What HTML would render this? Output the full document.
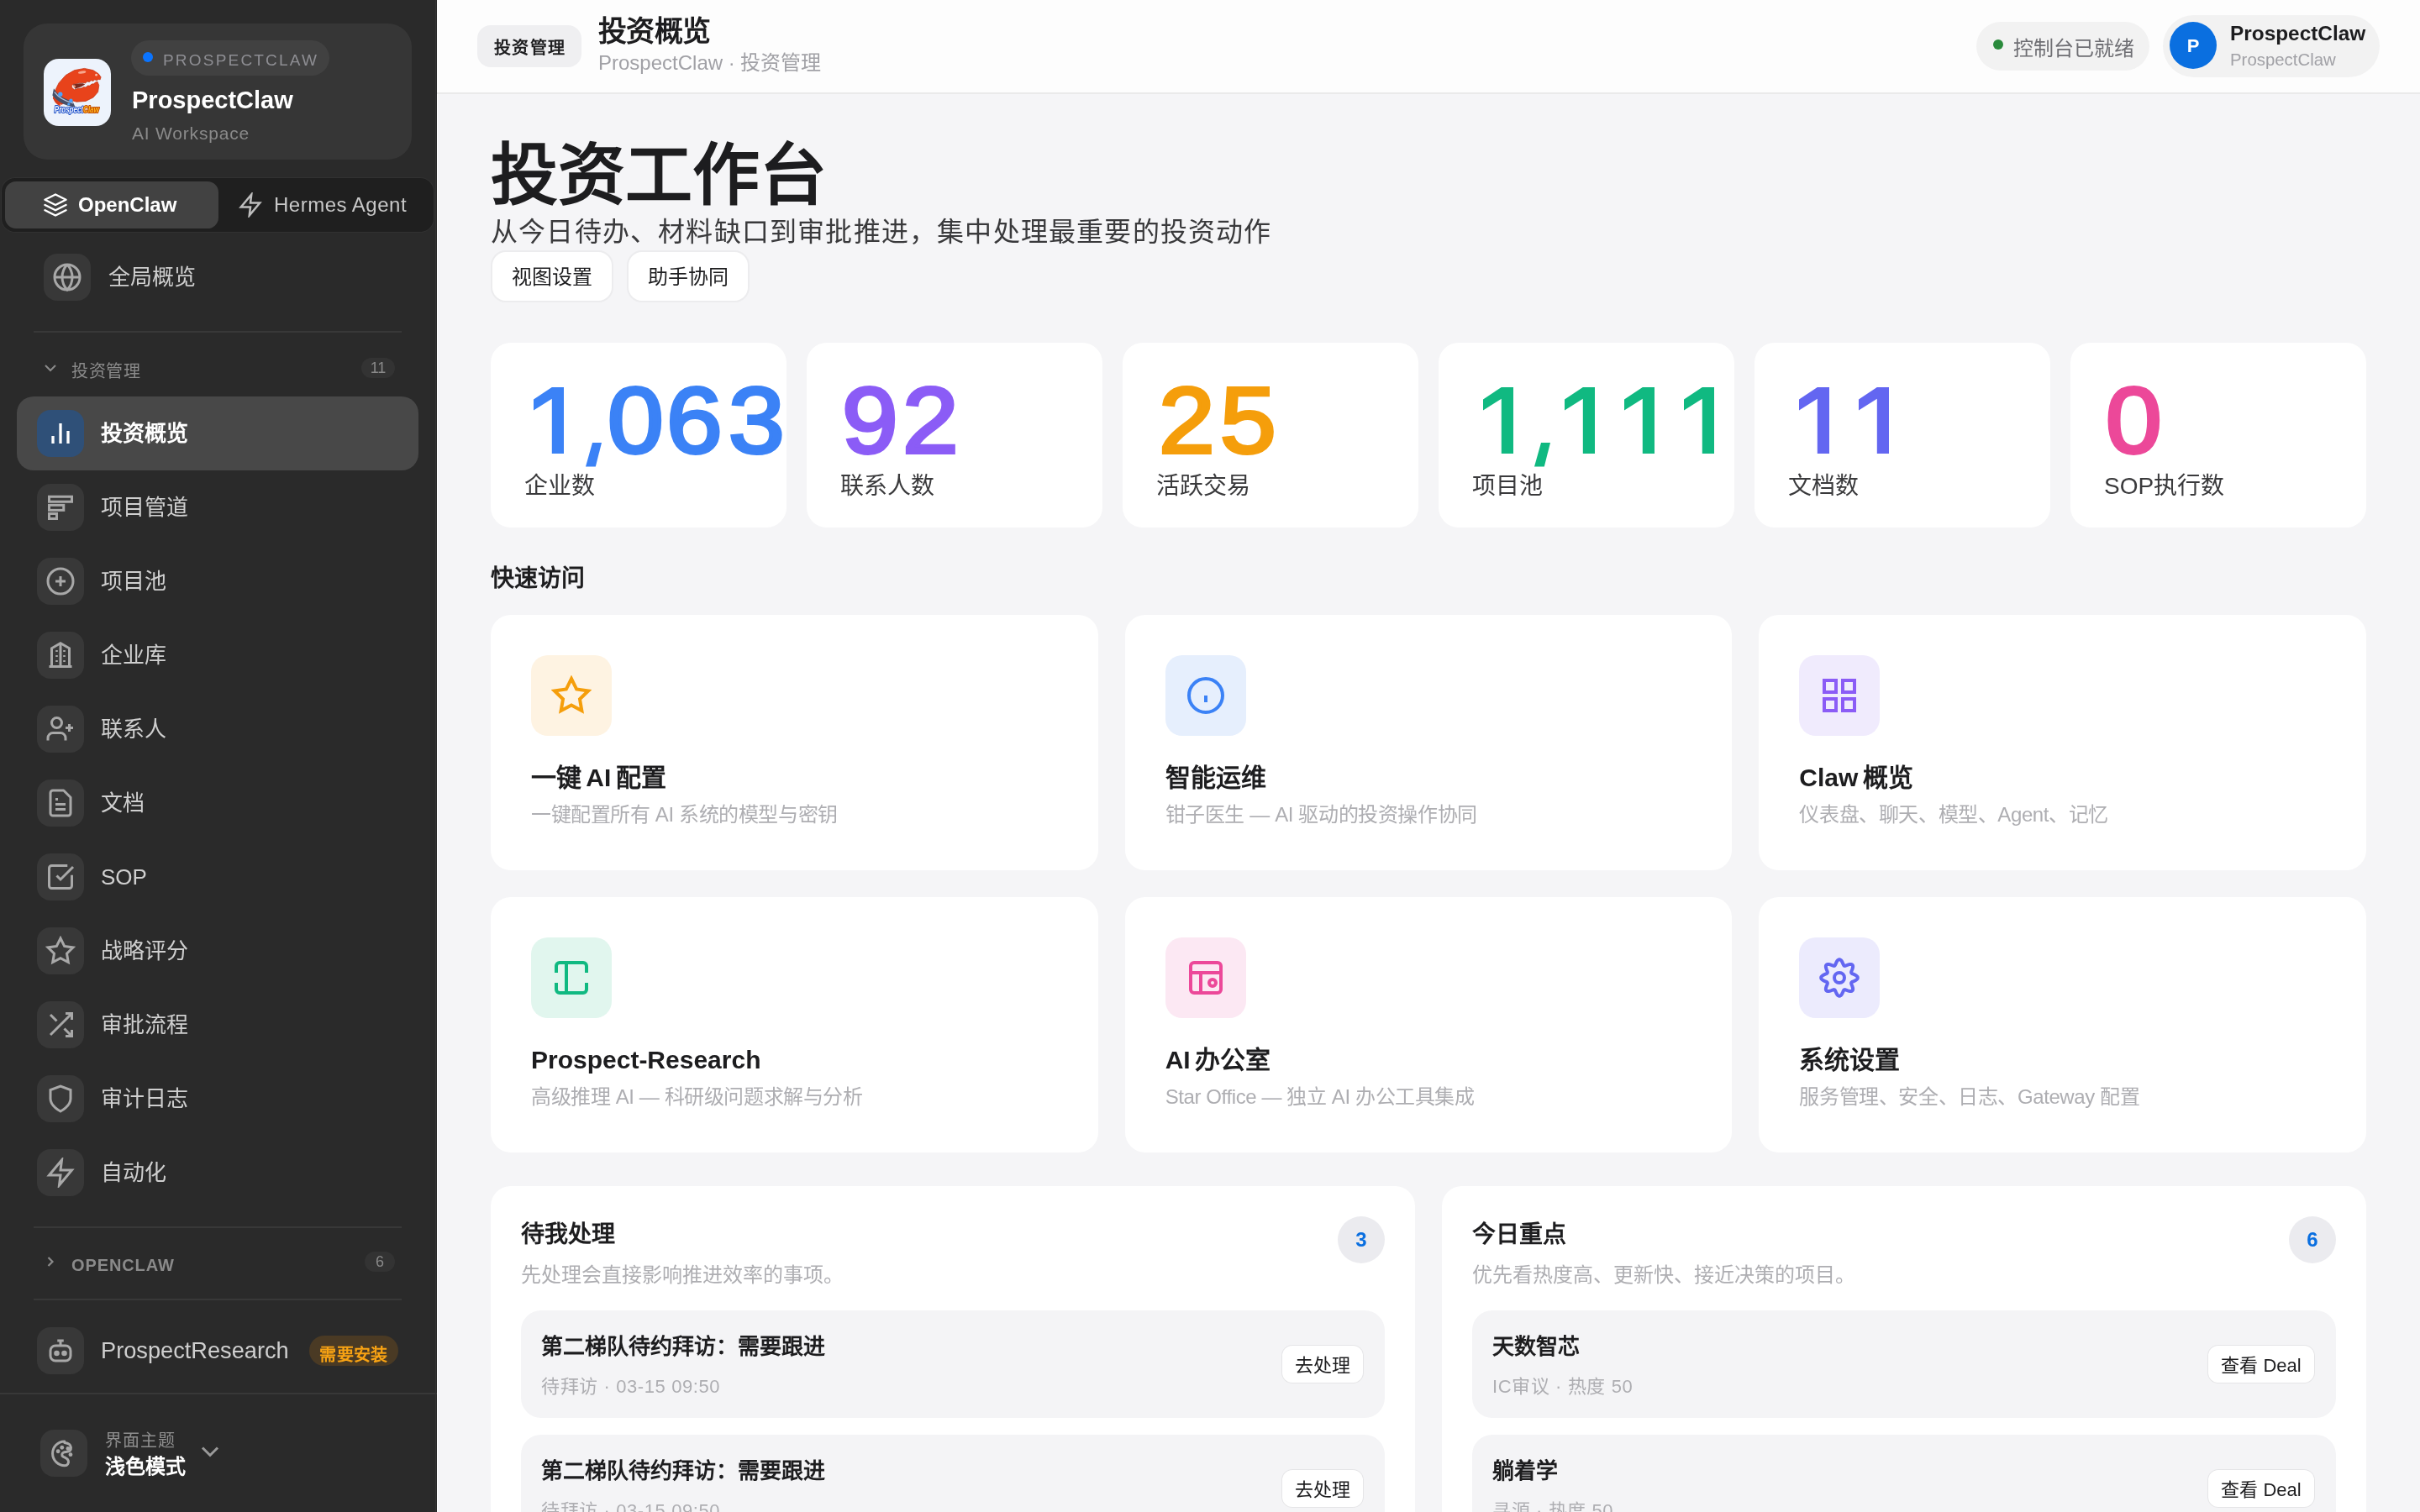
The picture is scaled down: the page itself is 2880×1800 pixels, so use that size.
<!DOCTYPE html>
<html lang="zh-CN">
<head>
<meta charset="utf-8">
<title>ProspectClaw</title>
<style>
*{box-sizing:border-box;margin:0;padding:0}
html,body{width:1440px;height:900px;overflow:hidden;background:#f5f5f7}
@media (min-width:2000px){html{zoom:2}}
body{font-family:"Liberation Sans",sans-serif;position:relative;-webkit-font-smoothing:antialiased;will-change:transform}
.a{position:absolute}
.t{position:absolute;white-space:nowrap;line-height:1}
svg{display:block}
/* sidebar */
#sb{position:absolute;left:0;top:0;width:260px;height:900px;background:#2a2a2a;overflow:hidden}
.ib{position:absolute;width:28px;height:28px;border-radius:8px;background:#383838}
.ib svg{position:absolute;left:5px;top:5px;width:18px;height:18px}
.si{position:absolute;left:60px;font-size:13px;color:#cfcfcf;line-height:16px}
.div{position:absolute;left:20px;width:219px;height:1px;background:#383838}
/* main */
#hd{position:absolute;left:260px;top:0;width:1180px;height:56px;background:#fdfdfd;border-bottom:1px solid #eaeaea}
.card{position:absolute;background:#fff;border-radius:12px}
.dg{position:absolute;font-weight:400;font-size:55.5px;line-height:1;-webkit-text-stroke:2px currentColor;transform:scaleX(1.08);transform-origin:0 0;white-space:nowrap}
.lbl{position:absolute;left:20px;font-size:14px;color:#3a3a3c;line-height:16px}
.qc{position:absolute;background:#fff;border-radius:12px;width:361.33px;height:152px}
.qi{position:absolute;left:24px;top:24px;width:48px;height:48px;border-radius:10px}
.qi svg{position:absolute;left:12px;top:12px;width:24px;height:24px}
.qt{position:absolute;left:24px;font-size:15px;word-spacing:-1.5px;font-weight:700;color:#1d1d1f;line-height:18px;white-space:nowrap}
.qs{position:absolute;left:24px;font-size:12px;letter-spacing:-0.2px;color:#aeaeb2;line-height:14px;white-space:nowrap}
.pn{position:absolute;background:#fff;border-radius:12px;width:550px;height:260px}
.pt{position:absolute;left:18px;font-size:14px;font-weight:700;color:#1d1d1f;line-height:16px}
.ps{position:absolute;left:18px;font-size:12px;color:#aeaeb2;line-height:14px;white-space:nowrap}
.pb{position:absolute;right:18px;width:28px;height:28px;border-radius:14px;background:#ebebef;color:#0a6fe0;font-size:12px;font-weight:700;text-align:center;line-height:28px}
.it{position:absolute;left:18px;width:514px;height:64px;border-radius:12px;background:#f4f4f6}
.itt{position:absolute;left:12px;font-size:13px;font-weight:700;color:#1d1d1f;line-height:15px;white-space:nowrap}
.its{position:absolute;left:12px;font-size:11px;letter-spacing:0.3px;margin-top:1px;color:#aeaeb2;line-height:13px;white-space:nowrap}
.ibtn{position:absolute;right:13px;top:21px;height:22px;border-radius:6px;background:#fff;font-size:11px;color:#1d1d1f;line-height:24px;text-align:center;box-shadow:0 0 0 0.5px rgba(0,0,0,0.06)}
</style>
</head>
<body>
<div id="sb">
  <!-- brand card -->
  <div class="a" style="left:14px;top:14px;width:231px;height:81px;border-radius:14px;background:#363636"></div>
  <div class="a" style="left:26px;top:35px;width:40px;height:40px">
    <svg width="40" height="40" viewBox="0 0 40 40">
      <rect x="0" y="0" width="40" height="40" rx="9" fill="#edf3fc"/>
      <path d="M5.70 23.70 L6.70 19.10 L9.00 14.40 L13.10 9.75 L18.30 6.80 L24.20 5.70 L29.40 6.80 L32.60 8.90 L34.05 10.90 L33.60 12.40 L32.60 12.20 L31.60 12.90 L30.40 12.40 L29.40 13.20 L28.20 12.90 L27.20 13.80 L25.90 13.50 L24.80 14.50 L23.40 14.20 L21.50 14.30 L19.60 14.70 L17.70 15.10 L16.60 16.00 L16.90 17.30 L18.30 18.40 L20.50 17.60 L22.50 17.50 L23.80 16.80 L25.00 17.00 L26.20 16.00 L27.40 16.00 L28.60 15.00 L29.80 14.90 L30.80 14.00 L32.00 13.60 L32.90 15.80 L32.30 19.80 L29.50 23.00 L25.00 25.20 L19.50 25.60 L16.00 24.60 L10.50 27.20 Z" fill="#e8431b" stroke="#c3300e" stroke-width="0.35" stroke-linejoin="round"/>
      <path d="M17.4 15.3 L19.6 14.9 L21.5 14.6 L23.4 14.6 L24.6 15.2 L22.4 16.6 L20.4 17.2 L18.6 17.9 Z" fill="#6d1406" opacity="0.9"/>
      <ellipse cx="22.8" cy="8.0" rx="2.4" ry="0.8" fill="#ffd2bd" opacity="0.7" transform="rotate(-10 22.8 8.0)"/>
      <circle cx="31.3" cy="9.6" r="0.7" fill="#ffe2d4" opacity="0.8"/>
      <circle cx="18.2" cy="16.4" r="0.8" fill="#ffb08f" opacity="0.8"/>
      <path d="M6.0 17.6 C8 21 12 24 17.2 25.2 L18.8 28.8 C12.5 28.2 7.5 25.2 5.2 21.8 Z" fill="#46506a"/>
      <path d="M6.4 19.8 C8.6 22.6 12.4 25.2 17.6 26.4" stroke="#b8c2d6" stroke-width="0.7" fill="none"/>
      <circle cx="9.9" cy="21.1" r="1.3" fill="#4aa3ff"/>
      <circle cx="16.2" cy="24.9" r="1.1" fill="#4aa3ff"/>
      <circle cx="14.9" cy="27.0" r="0.8" fill="#4aa3ff"/>
      <path d="M5.4 22.4 C5.8 25.2 7.4 27.2 10 28.2 L9.6 26 Z" fill="#d83b17"/>
      <text x="6.4" y="32.2" textLength="26.5" lengthAdjust="spacingAndGlyphs" font-family="Liberation Sans" font-weight="700" font-style="italic" font-size="5" fill="#f2f6ff" stroke="#1d50c8" stroke-width="1.1" stroke-linejoin="round" paint-order="stroke">Prospect<tspan fill="#ffb21e" stroke="#c04a00">Claw</tspan></text>
    </svg>
  </div>
  <div class="a" style="left:78px;top:24px;width:118px;height:21px;border-radius:11px;background:#414141"></div>
  <div class="a" style="left:85px;top:31px;width:6px;height:6px;border-radius:3px;background:#0a74ff"></div>
  <div class="t" style="left:97px;top:31px;font-size:9.5px;letter-spacing:1.1px;color:#8e8e93">PROSPECTCLAW</div>
  <div class="t" style="left:78.5px;top:52.3px;font-size:14.5px;font-weight:700;color:#fff">ProspectClaw</div>
  <div class="t" style="left:78.5px;top:74px;font-size:10.5px;letter-spacing:0.4px;color:#8a8a8a">AI Workspace</div>

  <!-- segmented -->
  <div class="a" style="left:1px;top:106px;width:257px;height:32px;border-radius:8px;background:#1f1f1f;box-shadow:0 0 0 0.5px #313131"></div>
  <div class="a" style="left:3px;top:108px;width:127px;height:28px;border-radius:6.5px;background:#424242"></div>
  <svg class="a" style="left:25.5px;top:114.5px" width="15" height="15" viewBox="0 0 24 24" fill="none" stroke="#fff" stroke-width="2" stroke-linejoin="round" stroke-linecap="round"><path d="M12 2 2 7l10 5 10-5-10-5Z"/><path d="m2 17 10 5 10-5"/><path d="m2 12 10 5 10-5"/></svg>
  <div class="t" style="left:46.5px;top:116.2px;font-size:12px;font-weight:700;color:#fff">OpenClaw</div>
  <svg class="a" style="left:141.5px;top:114.5px" width="15" height="15" viewBox="0 0 24 24" fill="none" stroke="#bdbdbd" stroke-width="2" stroke-linejoin="miter"><polygon points="13 2 3 14 12 14 11 22 21 10 12 10 13 2"/></svg>
  <div class="t" style="left:163px;top:116.2px;font-size:12px;letter-spacing:0.25px;color:#c8c8c8">Hermes Agent</div>

  <!-- global overview -->
  <div class="ib" style="left:26px;top:151px"><svg viewBox="0 0 24 24" fill="none" stroke="#a8a8a8" stroke-width="2"><circle cx="12" cy="12" r="10"/><path d="M12 2a14.5 14.5 0 0 0 0 20 14.5 14.5 0 0 0 0-20"/><path d="M2 12h20"/></svg></div>
  <div class="si" style="left:64.5px;top:157px;font-size:13px">全局概览</div>
  <div class="div" style="top:197px"></div>

  <!-- section header -->
  <svg class="a" style="left:24px;top:213.2px" width="12" height="12" viewBox="0 0 24 24" fill="none" stroke="#8a8a8a" stroke-width="2"><path d="m6 9 6 6 6-6"/></svg>
  <div class="t" style="left:42.5px;top:216.2px;font-size:10px;letter-spacing:0.3px;font-weight:500;color:#8a8a8a">投资管理</div>
  <div class="a" style="left:215px;top:213px;width:20px;height:12px;border-radius:6px;background:#333;color:#8a8a8a;font-size:9px;line-height:12px;text-align:center">11</div>

  <!-- active item -->
  <div class="a" style="left:10px;top:236px;width:239px;height:44px;border-radius:10px;background:#484848"></div>
  <div class="ib" style="left:22px;top:244px;background:#2f5078"><svg viewBox="0 0 24 24" fill="none" stroke="#fff" stroke-width="2.2"><path d="M18 20V10"/><path d="M12 20V4"/><path d="M6 20v-6"/></svg></div>
  <div class="si" style="top:250px;color:#fff;font-weight:700">投资概览</div>

  <div class="ib" style="top:288px;left:22px"><svg viewBox="0 0 24 24" fill="none" stroke="#a8a8a8" stroke-width="2"><rect x="3" y="3.5" width="18" height="4"/><rect x="3" y="10.25" width="11.5" height="4"/><rect x="3" y="17" width="6" height="4"/></svg></div>
  <div class="si" style="top:294px">项目管道</div>

  <div class="ib" style="top:332px;left:22px"><svg viewBox="0 0 24 24" fill="none" stroke="#a8a8a8" stroke-width="2"><circle cx="12" cy="12" r="10"/><path d="M8 12h8"/><path d="M12 8v8"/></svg></div>
  <div class="si" style="top:338px">项目池</div>

  <div class="ib" style="top:376px;left:22px"><svg viewBox="0 0 24 24" fill="none" stroke="#a8a8a8" stroke-width="2"><path d="M5 21V6.5L12 2.5l7 4V21"/><path d="M12 2.5V21"/><path d="M3 21h18"/><path d="M9 8v1.4M9 12v1.4M9 16v1.4M15 8v1.4M15 12v1.4M15 16v1.4" stroke-width="1.7"/></svg></div>
  <div class="si" style="top:382px">企业库</div>

  <div class="ib" style="top:420px;left:22px"><svg viewBox="0 0 24 24" fill="none" stroke="#a8a8a8" stroke-width="2"><path d="M16 21v-2a4 4 0 0 0-4-4H6a4 4 0 0 0-4 4v2"/><circle cx="9" cy="7" r="4"/><path d="M19 8v6"/><path d="M22 11h-6"/></svg></div>
  <div class="si" style="top:426px">联系人</div>

  <div class="ib" style="top:464px;left:22px"><svg viewBox="0 0 24 24" fill="none" stroke="#a8a8a8" stroke-width="2" stroke-linejoin="round"><path d="M14.5 2H6a2 2 0 0 0-2 2v16a2 2 0 0 0 2 2h12a2 2 0 0 0 2-2V7.5L14.5 2z"/><path d="M10 9H8"/><path d="M16 13H8"/><path d="M16 17H8"/></svg></div>
  <div class="si" style="top:470px">文档</div>

  <div class="ib" style="top:508px;left:22px"><svg viewBox="0 0 24 24" fill="none" stroke="#a8a8a8" stroke-width="2"><path d="M21 10.5V19a2 2 0 0 1-2 2H5a2 2 0 0 1-2-2V5a2 2 0 0 1 2-2h12.5"/><path d="m9 11 3 3L22 4"/></svg></div>
  <div class="si" style="top:514px">SOP</div>

  <div class="ib" style="top:552px;left:22px"><svg viewBox="0 0 24 24" fill="none" stroke="#a8a8a8" stroke-width="2"><polygon points="12 2 15.09 8.26 22 9.27 17 14.14 18.18 21.02 12 17.77 5.82 21.02 7 14.14 2 9.27 8.91 8.26 12 2"/></svg></div>
  <div class="si" style="top:558px">战略评分</div>

  <div class="ib" style="top:596px;left:22px"><svg viewBox="0 0 24 24" fill="none" stroke="#a8a8a8" stroke-width="2"><polyline points="16 3 21 3 21 8"/><line x1="4" y1="20" x2="21" y2="3"/><polyline points="21 16 21 21 16 21"/><line x1="15" y1="15" x2="21" y2="21"/><line x1="4" y1="4" x2="9" y2="9"/></svg></div>
  <div class="si" style="top:602px">审批流程</div>

  <div class="ib" style="top:640px;left:22px"><svg viewBox="0 0 24 24" fill="none" stroke="#a8a8a8" stroke-width="2"><path d="M12 22s8-4 8-10V5l-8-3-8 3v7c0 6 8 10 8 10z"/></svg></div>
  <div class="si" style="top:646px">审计日志</div>

  <div class="ib" style="top:684px;left:22px"><svg viewBox="0 0 24 24" fill="none" stroke="#a8a8a8" stroke-width="2"><polygon points="13 2 3 14 12 14 11 22 21 10 12 10 13 2"/></svg></div>
  <div class="si" style="top:690px">自动化</div>

  <div class="div" style="top:730px"></div>
  <svg class="a" style="left:25px;top:746px" width="10" height="10" viewBox="0 0 24 24" fill="none" stroke="#8a8a8a" stroke-width="2.6"><path d="m9 18 6-6-6-6"/></svg>
  <div class="t" style="left:42.5px;top:748px;font-size:10px;font-weight:700;letter-spacing:0.45px;color:#8a8a8a">OPENCLAW</div>
  <div class="a" style="left:217px;top:745px;width:18px;height:12px;border-radius:6px;background:#333;color:#8a8a8a;font-size:9px;line-height:12px;text-align:center">6</div>
  <div class="div" style="top:773px"></div>

  <div class="ib" style="top:790px;left:22px"><svg viewBox="0 0 24 24" fill="none" stroke="#a8a8a8" stroke-width="2"><path d="M12 4v4"/><path d="M9.5 4h5"/><rect x="4" y="8" width="16" height="12" rx="4"/><circle cx="9" cy="14" r="1.2" fill="#a8a8a8"/><circle cx="15" cy="14" r="1.2" fill="#a8a8a8"/></svg></div>
  <div class="si" style="top:796px;font-size:13.6px">ProspectResearch</div>
  <div class="a" style="left:184px;top:795px;width:53px;height:18px;border-radius:9px;background:#4a3a24;color:#f9a313;font-size:10px;letter-spacing:0.2px;font-weight:700;line-height:23px;text-align:center">需要安装</div>

  <div class="a" style="left:0;top:829px;width:260px;height:1px;background:#383838"></div>
  <div class="ib" style="left:24px;top:851px"><svg viewBox="0 0 24 24" fill="none" stroke="#a8a8a8" stroke-width="2" stroke-linecap="round"><path d="M12.5 2.6 A9.6 9.6 0 0 0 12.8 21.8 C14.8 21.8 16.2 19.8 15.5 17.8 C14.9 16.1 12.7 15.5 11.3 14.6 C10.1 13.8 10.3 12 11.7 11.4 C13.1 10.9 15.6 11.1 16.8 10.1 C18.1 8.9 17.9 6.1 16.3 4.9 C15.1 4 13.9 3.8 12.6 3.6"/><circle cx="10.5" cy="7.5" r="1.6" fill="#a8a8a8" stroke="none"/><circle cx="7.4" cy="10.5" r="1.6" fill="#a8a8a8" stroke="none"/><circle cx="15.3" cy="8.3" r="1.6" fill="#a8a8a8" stroke="none"/><circle cx="17.3" cy="13.1" r="1.6" fill="#a8a8a8" stroke="none"/></svg></div>
  <div class="t" style="left:62.5px;top:852.5px;font-size:10px;letter-spacing:0.5px;color:#8e8e8e">界面主题</div>
  <div class="t" style="left:62.5px;top:867px;font-size:12px;font-weight:700;color:#fff">浅色模式</div>
  <svg class="a" style="left:116px;top:855px" width="18" height="18" viewBox="0 0 24 24" fill="none" stroke="#9a9a9a" stroke-width="2"><path d="m6 9 6 6 6-6"/></svg>
</div>

<div class="a" style="left:259px;top:0;width:0.5px;height:900px;background:#343434"></div>
<div class="a" style="left:260px;top:0;width:0.5px;height:900px;background:#ffffff"></div>
<!-- header -->
<div id="hd">
  <div class="a" style="left:24px;top:15px;width:62px;height:25px;border-radius:8px;background:#efeff1;font-size:10px;letter-spacing:0.6px;text-indent:0.6px;font-weight:700;color:#1d1d1f;text-align:center;line-height:27px">投资管理</div>
  <div class="t" style="left:96px;top:10px;font-size:17px;letter-spacing:-0.3px;font-weight:700;color:#1d1d1f">投资概览</div>
  <div class="t" style="left:96px;top:31.5px;font-size:12px;color:#a1a1a6">ProspectClaw · 投资管理</div>
  <div class="a" style="left:916px;top:13px;width:103px;height:29px;border-radius:15px;background:#f2f2f2"></div>
  <div class="a" style="left:926px;top:23.6px;width:6px;height:6px;border-radius:3px;background:#2a8a3c"></div>
  <div class="t" style="left:938px;top:23px;font-size:12px;color:#6e6e73">控制台已就绪</div>
  <div class="a" style="left:1027px;top:9px;width:129px;height:37px;border-radius:19px;background:#f2f2f2"></div>
  <div class="a" style="left:1031px;top:13px;width:28px;height:28px;border-radius:14px;background:#0a6fe0;color:#fff;font-weight:700;font-size:11px;text-align:center;line-height:29.4px">P</div>
  <div class="t" style="left:1067px;top:14px;font-size:12.2px;font-weight:700;color:#1d1d1f">ProspectClaw</div>
  <div class="t" style="left:1067px;top:30.5px;font-size:10.2px;color:#a1a1a6">ProspectClaw</div>
</div>

<!-- content -->
<div class="t" style="left:292px;top:84.5px;font-size:40px;font-weight:700;color:#1d1d1f">投资工作台</div>
<div class="t" style="left:292px;top:129.8px;font-size:16px;letter-spacing:0.6px;color:#3a3a3c">从今日待办、材料缺口到审批推进，集中处理最重要的投资动作</div>
<div class="a" style="left:293px;top:150px;width:71px;height:29px;border-radius:8px;background:#fff;box-shadow:0 0 0 1px #ececee;font-size:12px;color:#1d1d1f;text-align:center;line-height:30px">视图设置</div>
<div class="a" style="left:374px;top:150px;width:71px;height:29px;border-radius:8px;background:#fff;box-shadow:0 0 0 1px #ececee;font-size:12px;color:#1d1d1f;text-align:center;line-height:30px">助手协同</div>

<!-- stats -->
<div class="card" style="left:292px;top:204px;width:176px;height:110px"><div class="lbl" style="top:77.5px">企业数</div></div>
<div class="card" style="left:480px;top:204px;width:176px;height:110px"><div class="lbl" style="top:77.5px">联系人数</div></div>
<div class="card" style="left:668px;top:204px;width:176px;height:110px"><div class="lbl" style="top:77.5px">活跃交易</div></div>
<div class="card" style="left:856px;top:204px;width:176px;height:110px"><div class="lbl" style="top:77.5px">项目池</div></div>
<div class="card" style="left:1044px;top:204px;width:176px;height:110px"><div class="lbl" style="top:77.5px">文档数</div></div>
<div class="card" style="left:1232px;top:204px;width:176px;height:110px"><div class="lbl" style="top:77.5px">SOP执行数</div></div>


<!-- numbers -->
<svg class="a" style="left:317.45px;top:230.45px" width="18" height="39.5" viewBox="0 0 18 39.5"><polygon points="0,7.27 10.9,0 18,0 18,39.5 10.9,39.5 10.9,6.9 0,13.7" fill="#3b82f6"/></svg>
<svg class="a" style="left:348.30px;top:263.4px" width="10" height="15" viewBox="0 0 10 15"><polygon points="4.00,0.00 9.50,0.00 5.90,14.20 0.00,14.20" fill="#3b82f6"/></svg>
<div class="dg" style="left:361.50px;top:223.1px;color:#3b82f6">0</div>
<div class="dg" style="left:396.40px;top:223.1px;color:#3b82f6">6</div>
<div class="dg" style="left:433.50px;top:223.1px;color:#3b82f6">3</div>
<div class="dg" style="left:501.00px;top:223.1px;color:#8b5cf6">9</div>
<div class="dg" style="left:536.80px;top:223.1px;color:#8b5cf6">2</div>
<div class="dg" style="left:689.50px;top:223.1px;color:#f59e0b">2</div>
<div class="dg" style="left:726.20px;top:223.1px;color:#f59e0b">5</div>
<svg class="a" style="left:882.40px;top:230.45px" width="18" height="39.5" viewBox="0 0 18 39.5"><polygon points="0,7.27 10.9,0 18,0 18,39.5 10.9,39.5 10.9,6.9 0,13.7" fill="#10b981"/></svg>
<svg class="a" style="left:912.80px;top:263.4px" width="10" height="15" viewBox="0 0 10 15"><polygon points="4.00,0.00 9.50,0.00 5.90,14.20 0.00,14.20" fill="#10b981"/></svg>
<svg class="a" style="left:931.00px;top:230.45px" width="18" height="39.5" viewBox="0 0 18 39.5"><polygon points="0,7.27 10.9,0 18,0 18,39.5 10.9,39.5 10.9,6.9 0,13.7" fill="#10b981"/></svg>
<svg class="a" style="left:966.30px;top:230.45px" width="18" height="39.5" viewBox="0 0 18 39.5"><polygon points="0,7.27 10.9,0 18,0 18,39.5 10.9,39.5 10.9,6.9 0,13.7" fill="#10b981"/></svg>
<svg class="a" style="left:1001.90px;top:230.45px" width="18" height="39.5" viewBox="0 0 18 39.5"><polygon points="0,7.27 10.9,0 18,0 18,39.5 10.9,39.5 10.9,6.9 0,13.7" fill="#10b981"/></svg>
<svg class="a" style="left:1070.60px;top:230.45px" width="18" height="39.5" viewBox="0 0 18 39.5"><polygon points="0,7.27 10.9,0 18,0 18,39.5 10.9,39.5 10.9,6.9 0,13.7" fill="#6366f1"/></svg>
<svg class="a" style="left:1106.20px;top:230.45px" width="18" height="39.5" viewBox="0 0 18 39.5"><polygon points="0,7.27 10.9,0 18,0 18,39.5 10.9,39.5 10.9,6.9 0,13.7" fill="#6366f1"/></svg>
<div class="dg" style="left:1252.90px;top:223.1px;color:#ec4899">0</div>
<div class="t" style="left:292px;top:337.5px;font-size:14px;font-weight:700;color:#1d1d1f">快速访问</div>

<!-- quick cards -->
<div class="qc" style="left:292px;top:366px">
  <div class="qi" style="background:#fef3e2"><svg viewBox="0 0 24 24" fill="none" stroke="#f59e0b" stroke-width="2"><polygon points="12 2 15.09 8.26 22 9.27 17 14.14 18.18 21.02 12 17.77 5.82 21.02 7 14.14 2 9.27 8.91 8.26 12 2"/></svg></div>
  <div class="qt" style="top:88px">一键 AI 配置</div>
  <div class="qs" style="top:112px">一键配置所有 AI 系统的模型与密钥</div>
</div>
<div class="qc" style="left:669.33px;top:366px">
  <div class="qi" style="background:#e6effd"><svg viewBox="0 0 24 24" fill="none" stroke="#3b82f6" stroke-width="2"><circle cx="12" cy="12" r="10"/><path d="M12 16v-4"/></svg></div>
  <div class="qt" style="top:88px">智能运维</div>
  <div class="qs" style="top:112px">钳子医生 — AI 驱动的投资操作协同</div>
</div>
<div class="qc" style="left:1046.67px;top:366px">
  <div class="qi" style="background:#f0ebfd"><svg viewBox="0 0 24 24" fill="none" stroke="#8b5cf6" stroke-width="2"><rect x="3" y="3" width="7" height="7"/><rect x="14" y="3" width="7" height="7"/><rect x="14" y="14" width="7" height="7"/><rect x="3" y="14" width="7" height="7"/></svg></div>
  <div class="qt" style="top:88px">Claw 概览</div>
  <div class="qs" style="top:112px">仪表盘、聊天、模型、Agent、记忆</div>
</div>
<div class="qc" style="left:292px;top:534px">
  <div class="qi" style="background:#e1f6ee"><svg viewBox="0 0 24 24" fill="none" stroke="#10b981" stroke-width="2"><path d="M3 9V5a2 2 0 0 1 2-2h14a2 2 0 0 1 2 2v4"/><path d="M21 15v4a2 2 0 0 1-2 2H5a2 2 0 0 1-2-2v-4"/><path d="M9 3v18"/></svg></div>
  <div class="qt" style="top:88px">Prospect-Research</div>
  <div class="qs" style="top:112px">高级推理 AI — 科研级问题求解与分析</div>
</div>
<div class="qc" style="left:669.33px;top:534px">
  <div class="qi" style="background:#fce8f3"><svg viewBox="0 0 24 24" fill="none" stroke="#ec4899" stroke-width="2"><rect x="3" y="3" width="18" height="18" rx="2"/><path d="M3 9h18"/><path d="M9 21V9"/><circle cx="16" cy="15" r="2"/></svg></div>
  <div class="qt" style="top:88px">AI 办公室</div>
  <div class="qs" style="top:112px">Star Office — 独立 AI 办公工具集成</div>
</div>
<div class="qc" style="left:1046.67px;top:534px">
  <div class="qi" style="background:#ecebfd"><svg viewBox="0 0 24 24" fill="none" stroke="#6366f1" stroke-width="2" id="gear"><path d="M22.90 12.00 L22.81 12.42 L22.56 12.83 L22.17 13.20 L21.67 13.53 L21.12 13.81 L20.56 14.06 L20.05 14.27 L19.61 14.47 L19.30 14.69 L19.11 14.95 L19.06 15.26 L19.13 15.63 L19.29 16.08 L19.51 16.60 L19.73 17.17 L19.92 17.76 L20.04 18.34 L20.06 18.88 L19.95 19.35 L19.71 19.71 L19.35 19.95 L18.88 20.06 L18.34 20.04 L17.76 19.92 L17.17 19.73 L16.60 19.51 L16.08 19.29 L15.63 19.13 L15.26 19.06 L14.95 19.11 L14.69 19.30 L14.47 19.61 L14.27 20.05 L14.06 20.56 L13.81 21.12 L13.53 21.67 L13.20 22.17 L12.83 22.56 L12.42 22.81 L12.00 22.90 L11.58 22.81 L11.17 22.56 L10.80 22.17 L10.47 21.67 L10.19 21.12 L9.94 20.56 L9.73 20.05 L9.53 19.61 L9.31 19.30 L9.05 19.11 L8.74 19.06 L8.37 19.13 L7.92 19.29 L7.40 19.51 L6.83 19.73 L6.24 19.92 L5.66 20.04 L5.12 20.06 L4.65 19.95 L4.29 19.71 L4.05 19.35 L3.94 18.88 L3.96 18.34 L4.08 17.76 L4.27 17.17 L4.49 16.60 L4.71 16.08 L4.87 15.63 L4.94 15.26 L4.89 14.95 L4.70 14.69 L4.39 14.47 L3.95 14.27 L3.44 14.06 L2.88 13.81 L2.33 13.53 L1.83 13.20 L1.44 12.83 L1.19 12.42 L1.10 12.00 L1.19 11.58 L1.44 11.17 L1.83 10.80 L2.33 10.47 L2.88 10.19 L3.44 9.94 L3.95 9.73 L4.39 9.53 L4.70 9.31 L4.89 9.05 L4.94 8.74 L4.87 8.37 L4.71 7.92 L4.49 7.40 L4.27 6.83 L4.08 6.24 L3.96 5.66 L3.94 5.12 L4.05 4.65 L4.29 4.29 L4.65 4.05 L5.12 3.94 L5.66 3.96 L6.24 4.08 L6.83 4.27 L7.40 4.49 L7.92 4.71 L8.37 4.87 L8.74 4.94 L9.05 4.89 L9.31 4.70 L9.53 4.39 L9.73 3.95 L9.94 3.44 L10.19 2.88 L10.47 2.33 L10.80 1.83 L11.17 1.44 L11.58 1.19 L12.00 1.10 L12.42 1.19 L12.83 1.44 L13.20 1.83 L13.53 2.33 L13.81 2.88 L14.06 3.44 L14.27 3.95 L14.47 4.39 L14.69 4.70 L14.95 4.89 L15.26 4.94 L15.63 4.87 L16.08 4.71 L16.60 4.49 L17.17 4.27 L17.76 4.08 L18.34 3.96 L18.88 3.94 L19.35 4.05 L19.71 4.29 L19.95 4.65 L20.06 5.12 L20.04 5.66 L19.92 6.24 L19.73 6.83 L19.51 7.40 L19.29 7.92 L19.13 8.37 L19.06 8.74 L19.11 9.05 L19.30 9.31 L19.61 9.53 L20.05 9.73 L20.56 9.94 L21.12 10.19 L21.67 10.47 L22.17 10.80 L22.56 11.17 L22.81 11.58 Z" stroke-linejoin="round"/><circle cx="12" cy="12" r="3"/></svg></div>
  <div class="qt" style="top:88px">系统设置</div>
  <div class="qs" style="top:112px">服务管理、安全、日志、Gateway 配置</div>
</div>

<!-- panels -->
<div class="pn" style="left:292px;top:706px">
  <div class="pt" style="top:21px">待我处理</div>
  <div class="pb" style="top:18px">3</div>
  <div class="ps" style="top:46px">先处理会直接影响推进效率的事项。</div>
  <div class="it" style="top:74px">
    <div class="itt" style="top:14px">第二梯队待约拜访：需要跟进</div>
    <div class="its" style="top:38px">待拜访 · 03-15 09:50</div>
    <div class="ibtn" style="width:48px">去处理</div>
  </div>
  <div class="it" style="top:148px">
    <div class="itt" style="top:14px">第二梯队待约拜访：需要跟进</div>
    <div class="its" style="top:38px">待拜访 · 03-15 09:50</div>
    <div class="ibtn" style="width:48px">去处理</div>
  </div>
</div>
<div class="pn" style="left:858px;top:706px">
  <div class="pt" style="top:21px">今日重点</div>
  <div class="pb" style="top:18px">6</div>
  <div class="ps" style="top:46px">优先看热度高、更新快、接近决策的项目。</div>
  <div class="it" style="top:74px">
    <div class="itt" style="top:14px">天数智芯</div>
    <div class="its" style="top:38px">IC审议 · 热度 50</div>
    <div class="ibtn" style="width:63px">查看 Deal</div>
  </div>
  <div class="it" style="top:148px">
    <div class="itt" style="top:14px">躺着学</div>
    <div class="its" style="top:38px">寻源 · 热度 50</div>
    <div class="ibtn" style="width:63px">查看 Deal</div>
  </div>
</div>
</body>
</html>
